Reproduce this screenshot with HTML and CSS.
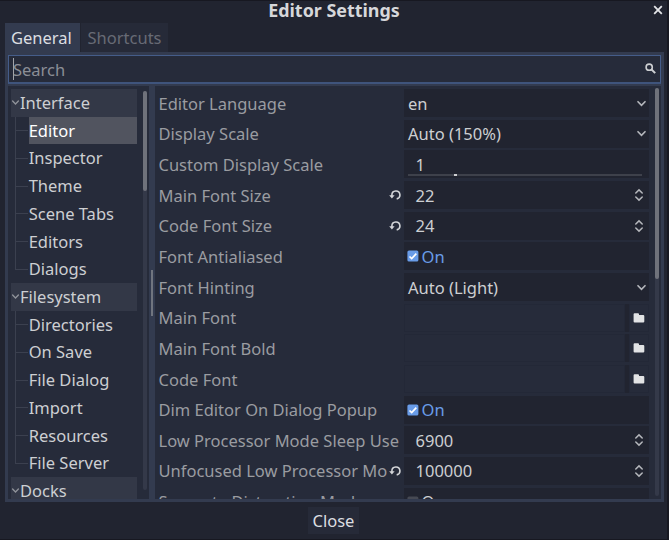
FILE: index.html
```html
<!DOCTYPE html>
<html lang="en">
<head>
<meta charset="utf-8">
<title>Editor Settings</title>
<link rel="stylesheet" href="styles.css">
</head>
<body>
<svg class="defs" width="0" height="0">
  <symbol id="chevron" viewBox="0 0 10 10"><path d="M1.8 3.4 5 6.6 8.2 3.4" fill="none" stroke="currentColor" stroke-width="1.5" stroke-linecap="round"/></symbol>
  <symbol id="updown" viewBox="0 0 10 14"><path d="M1.8 5 5 1.9 8.2 5M1.8 9 5 12.1 8.2 9" fill="none" stroke="currentColor" stroke-width="1.5" stroke-linecap="round"/></symbol>
  <symbol id="reset" viewBox="0 0 12 12"><path d="M2.9 7V6a4 4 0 1 1 4.8 3.9" fill="none" stroke="currentColor" stroke-width="1.6"/><path d="M.2 6.2h5.4L2.9 9.6z" fill="currentColor"/></symbol>
  <symbol id="folder" viewBox="0 0 12 12"><path d="M.6 2.3Q.6 1.3 1.6 1.3H5Q6 1.3 6 2.3V3h4.2Q11.3 3 11.3 4v5.6q0 1-1.1 1H1.6q-1 0-1-1z" fill="currentColor"/></symbol>
  <symbol id="check" viewBox="0 0 12 12"><rect x=".4" y=".5" width="11" height="11" rx="1.6" fill="#699ce8"/><path d="M2.5 6.5 4.7 8.6 9.3 3.7" fill="none" stroke="#fff" stroke-width="1.7"/></symbol>
  <symbol id="uncheck" viewBox="0 0 12 12"><rect x=".4" y=".5" width="11" height="11" rx="1.6" fill="#464953"/></symbol>
</svg>
<div class="window">
  <header class="titlebar"><h1>Editor Settings</h1>
    <svg class="close-icon" viewBox="0 0 10 10"><path d="M1.2 1.2 8.8 8.8M8.8 1.2 1.2 8.8" fill="none" stroke="#e4e5e8" stroke-width="1.8"/></svg>
  </header>
  <nav class="tabs"><div class="tab active">General</div><div class="tab">Shortcuts</div></nav>
  <main class="panel">
    <div class="search"><span class="caret"></span><span class="placeholder">Search</span>
      <svg class="search-icon" viewBox="0 0 11 11"><circle cx="4.2" cy="4.2" r="3.1" fill="none" stroke="currentColor" stroke-width="1.6"/><path d="M6.3 6.2 10.2 10.1" stroke="currentColor" stroke-width="2"/></svg>
    </div>
    <div class="split">
      <div class="tree">
        <div class="items">
          <div class="group"><svg><use href="#chevron"/></svg><span>Interface</span></div>
          <div class="children">
            <div class="item"><span class="selected">Editor</span></div>
            <div class="item"><span>Inspector</span></div>
            <div class="item"><span>Theme</span></div>
            <div class="item"><span>Scene Tabs</span></div>
            <div class="item"><span>Editors</span></div>
            <div class="item"><span>Dialogs</span></div>
          </div>
          <div class="group"><svg><use href="#chevron"/></svg><span>Filesystem</span></div>
          <div class="children">
            <div class="item"><span>Directories</span></div>
            <div class="item"><span>On Save</span></div>
            <div class="item"><span>File Dialog</span></div>
            <div class="item"><span>Import</span></div>
            <div class="item"><span>Resources</span></div>
            <div class="item"><span>File Server</span></div>
          </div>
          <div class="group"><svg><use href="#chevron"/></svg><span>Docks</span></div>
        </div>
        <div class="scroll tree-scroll"><div class="thumb"></div></div>
      </div>
      <div class="splitter"><div class="grabber"></div></div>
      <div class="inspector">
        <div class="rows">
          <div class="row"><label>Editor Language</label><div class="field select">en<svg class="chev"><use href="#chevron"/></svg></div></div>
          <div class="row"><label>Display Scale</label><div class="field select">Auto (150%)<svg class="chev"><use href="#chevron"/></svg></div></div>
          <div class="row"><label>Custom Display Scale</label><div class="field number">1<div class="slider"><div class="knob"></div></div></div></div>
          <div class="row"><label>Main Font Size</label><svg class="reset"><use href="#reset"/></svg><div class="field number">22<svg class="spin"><use href="#updown"/></svg></div></div>
          <div class="row"><label>Code Font Size</label><svg class="reset"><use href="#reset"/></svg><div class="field number">24<svg class="spin"><use href="#updown"/></svg></div></div>
          <div class="row"><label>Font Antialiased</label><div class="field bool on"><svg class="box"><use href="#check"/></svg>On</div></div>
          <div class="row"><label>Font Hinting</label><div class="field select">Auto (Light)<svg class="chev"><use href="#chevron"/></svg></div></div>
          <div class="row"><label>Main Font</label><div class="field file"><div class="path"></div><div class="browse"><svg><use href="#folder"/></svg></div></div></div>
          <div class="row"><label>Main Font Bold</label><div class="field file"><div class="path"></div><div class="browse"><svg><use href="#folder"/></svg></div></div></div>
          <div class="row"><label>Code Font</label><div class="field file"><div class="path"></div><div class="browse"><svg><use href="#folder"/></svg></div></div></div>
          <div class="row"><label>Dim Editor On Dialog Popup</label><div class="field bool on"><svg class="box"><use href="#check"/></svg>On</div></div>
          <div class="row"><label>Low Processor Mode Sleep Use</label><div class="field number">6900<svg class="spin"><use href="#updown"/></svg></div></div>
          <div class="row"><label>Unfocused Low Processor Mo</label><svg class="reset"><use href="#reset"/></svg><div class="field number">100000<svg class="spin"><use href="#updown"/></svg></div></div>
          <div class="row"><label>Separate Distraction Mode</label><div class="field bool"><svg class="box"><use href="#uncheck"/></svg>On</div></div>
        </div>
        <div class="scroll inspector-scroll"><div class="thumb"></div></div>
      </div>
    </div>
  </main>
  <footer><button>Close</button></footer>
</div>
</body>
</html>
```
FILE: styles.css
```css
* { box-sizing: border-box; }
body {
  margin: 0;
  width: 669px;
  height: 540px;
  overflow: hidden;
  background: #171821;
  font: 16.5px/28px "Noto Sans", sans-serif;
  color: #cdcfd2;
  white-space: nowrap;
}
svg { display: block; flex: none; }
.defs { position: absolute; }
.window {
  width: 667px;
  height: 538px;
  margin-top: 1px;
  background: #212430;
  display: flex;
  flex-direction: column;
}
.titlebar {
  height: 22px;
  display: flex;
  justify-content: center;
  position: relative;
}
h1 { margin: 0 0 0 1px; font-size: 17.9px; line-height: 18px; font-weight: 700; color: #d6d7da; }
.close-icon { position: absolute; right: 4px; top: 4px; width: 10px; height: 10px; }
.tabs { display: flex; height: 29px; gap: 1px; padding-left: 4.5px; }
.tab { padding: 0 6.5px; width: 87px; background: #262a38; color: #686b75; line-height: 29px; }
.tab.active { width: 75.5px; background: #333b4f; color: #dcdee1; }
.panel {
  height: 450px;
  margin: 0 3px 0 4.5px;
  padding: 3px 3px 3px 3px;
  background: #333b4f;
  display: flex;
  flex-direction: column;
  gap: 2.5px;
}
.search {
  height: 28.5px;
  border: 1px solid #455d8a;
  border-bottom: 2px solid #3f547c;
  background: #262b3a;
  display: flex;
  align-items: center;
  padding: 0 4px;
  color: #8b8e96;
}
.placeholder { padding-top: 2px; }
.caret { width: 1.5px; height: 22px; background: #a2a4aa; margin-right: -1px; }
.search-icon { width: 11px; height: 11px; margin-left: auto; color: #cdcfd2; }
.split { flex: 1; min-height: 0; display: flex; }
.tree { width: 141.5px; background: #262b3a; overflow: hidden; padding: 3px 2px 0 3.5px; display: flex; justify-content: space-between; }
.items { width: 126px; }
.group { height: 27.72px; background: #333847; display: flex; align-items: center; }
.group span { padding-top: 1px; }
.group svg { width: 9px; height: 9px; color: #90939a; }
.children { margin-left: 4px; }
.item { height: 27.72px; display: flex; background: linear-gradient(#3b404f, #3b404f) 0 0 / 1px 100% no-repeat, linear-gradient(#3b404f, #3b404f) 0 50% / 13px 1px no-repeat; }
.item:last-child { background-size: 1px 50%, 13px 1px; }
.item span { margin-left: 13.7px; flex: 1; line-height: 28.8px; }
.item .selected { background: #51545f; color: #fff; }
.scroll { background: #343949; border-radius: 2px; }
.thumb { background: #6f727b; border-radius: 2px; }
.tree-scroll { width: 4.5px; height: 399px; margin-top: 2px; }
.tree-scroll .thumb { height: 100px; }
.splitter { width: 6px; display: flex; align-items: center; justify-content: center; }
.grabber { width: 2px; height: 46px; background: #70757f; }
.inspector { flex: 1; min-width: 0; background: #262b3a; overflow: hidden; display: flex; justify-content: space-between; padding: 3px 2px 0 3.5px; }
.inspector-scroll { width: 4.5px; height: 408px; margin-top: -1px; }
.inspector-scroll .thumb { height: 191px; }
.rows { width: 490.5px; display: flex; flex-direction: column; gap: 2.67px; }
.row { height: 28px; flex: none; display: flex; align-items: center; }
label { flex: 1; min-width: 0; color: #9a9ca1; padding-top: 1.2px; }
.field { width: 245.5px; height: 28px; background: #212430; display: flex; align-items: center; padding: 1.2px 0 0 4.5px; position: relative; }
.number { padding-left: 12px; }
.chev { width: 11px; height: 11px; margin: -1px 2px 0 auto; color: #b5b7bc; }
.spin { width: 10px; height: 14px; margin: -1px 5px 0 auto; color: #b5b7bc; }
.reset { width: 12px; height: 12px; margin-right: 2.5px; color: #d3d5d8; }
.slider { position: absolute; left: 4.5px; right: 7px; bottom: 2px; height: 2px; background: #3e414b; }
.knob { width: 3px; height: 2px; margin-left: 46px; background: #cdcfd2; }
.box { width: 12px; height: 12px; margin: -1px 3px 0 -1.5px; }
.on { color: #699ce8; }
.file { padding: 0; gap: 4px; }
.path { flex: 1; height: 28px; background: #262b3a; border: 1px solid #232837; }
.browse { width: 20px; height: 28px; background: #262b3a; border: 1px solid #232837; display: flex; align-items: center; justify-content: center; color: #e2e3e5; }
.browse svg { width: 12px; height: 12px; }
footer { display: flex; justify-content: center; padding-top: 5.4px; }
button { width: 51px; height: 27px; margin: 0; padding: 0; border: 0; background: #262a38; color: #dcdee1; font: inherit; line-height: 26px; }
```
